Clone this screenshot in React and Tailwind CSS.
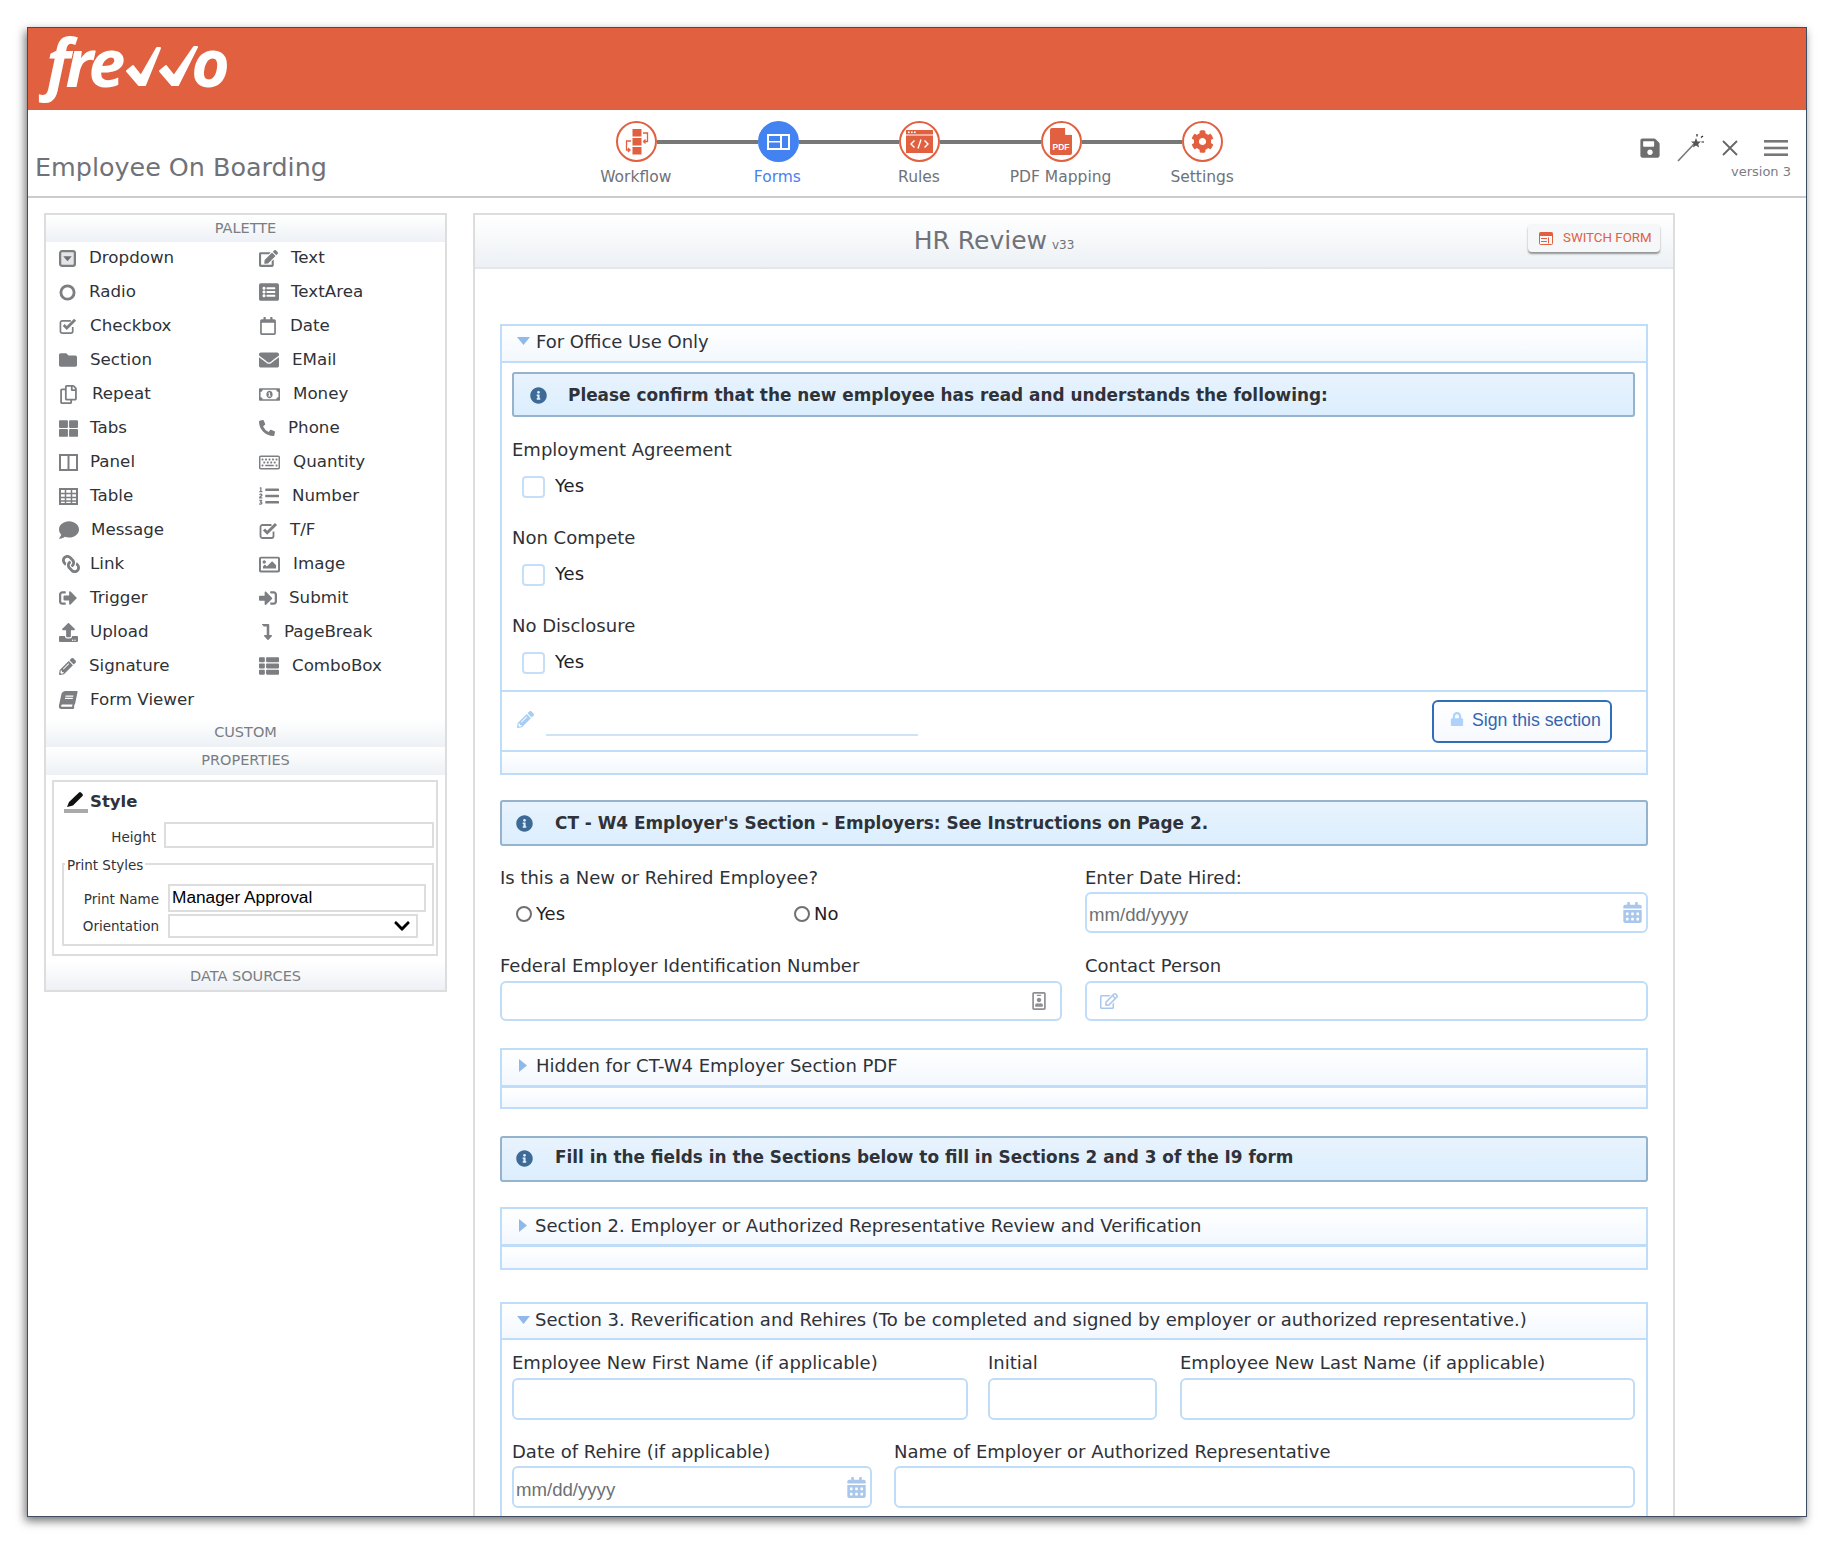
import React from "react";
import {
  FaFolder, FaRegCopy, FaThLarge, FaComment, FaLink, FaSignOutAlt, FaUpload, FaPencilAlt, FaBook, FaEdit, FaRegEdit, FaListAlt, FaRegCalendar,
  FaEnvelope, FaRegMoneyBillAlt, FaPhoneAlt, FaRegKeyboard, FaListOl, FaRegImage, FaSignInAlt, FaLevelDownAlt,
  FaThList, FaInfoCircle, FaLock, FaCalendarAlt, FaChevronDown, FaSave, FaCog, FaRegIdBadge,
} from "react-icons/fa";

const DropdownIcon = ({ size }) => (
  <svg width={size} height={size} viewBox="0 0 18 18">
    <rect x="1.2" y="1.2" width="15.6" height="15.6" rx="2" fill="#e4e5e6" stroke="#7c7e82" strokeWidth="2.4" />
    <path d="M4.5 6.5h9L9 12z" fill="#6c6e72" />
  </svg>
);

const RadioIcon = ({ size }) => (
  <svg width={size} height={size} viewBox="0 0 18 18" fill="none">
    <circle cx="9" cy="9" r="7" stroke="#7c7e82" strokeWidth="3" />
  </svg>
);

const CheckIcon = ({ size }) => (
  <svg width={size} height={size} viewBox="0 0 19 18" fill="none">
    <path d="M14.5 10v4.5a2 2 0 0 1-2 2h-9a2 2 0 0 1-2-2v-9a2 2 0 0 1 2-2h9" stroke="#7c7e82" strokeWidth="1.8" />
    <path d="m5 8 3.2 3.2L17 2.5" stroke="#7c7e82" strokeWidth="3" />
  </svg>
);

const PanelIcon = ({ size }) => (
  <svg width={size} height={size} viewBox="0 0 19 19" fill="none">
    <rect x="1" y="2" width="17" height="15" stroke="#7c7e82" strokeWidth="2" />
    <path d="M9.5 2v15" stroke="#7c7e82" strokeWidth="2" />
  </svg>
);

const TableIcon = ({ size }) => (
  <svg width={size} height={size} viewBox="0 0 19 19" fill="none">
    <rect x="1" y="2" width="17" height="15" fill="#fff" stroke="#7c7e82" strokeWidth="2" />
    <path d="M1 6.5h17M1 10.5h17M1 14h17M6.5 2v15M12.5 2v15" stroke="#7c7e82" strokeWidth="1.5" />
  </svg>
);

const leftItems = [
  { label: "Dropdown", Icon: DropdownIcon, size: 17, gap: "ml-[9px]" },
  { label: "Radio", Icon: RadioIcon, size: 17, gap: "ml-[9px]" },
  { label: "Checkbox", Icon: CheckIcon, size: 18, gap: "ml-[10px]" },
  { label: "Section", Icon: FaFolder, size: 18, gap: "ml-[10px]" },
  { label: "Repeat", Icon: FaRegCopy, size: 19, gap: "ml-[12px]" },
  { label: "Tabs", Icon: FaThLarge, size: 19, gap: "ml-[10px]" },
  { label: "Panel", Icon: PanelIcon, size: 19, gap: "ml-[10px]" },
  { label: "Table", Icon: TableIcon, size: 19, gap: "ml-[10px]" },
  { label: "Message", Icon: FaComment, size: 20, gap: "ml-[11px]" },
  { label: "Link", Icon: FaLink, size: 18, gap: "ml-[10px]", cls: "-scale-x-100" },
  { label: "Trigger", Icon: FaSignOutAlt, size: 18, gap: "ml-[10px]" },
  { label: "Upload", Icon: FaUpload, size: 19, gap: "ml-[10px]" },
  { label: "Signature", Icon: FaPencilAlt, size: 17, gap: "ml-[9px]" },
  { label: "Form Viewer", Icon: FaBook, size: 18, gap: "ml-[10px]", cls: "-skew-x-12" },
];

const rightItems = [
  { label: "Text", Icon: FaEdit, size: 19, gap: "ml-[11px]" },
  { label: "TextArea", Icon: FaListAlt, size: 20, gap: "ml-[11px]" },
  { label: "Date", Icon: FaRegCalendar, size: 18, gap: "ml-[10px]" },
  { label: "EMail", Icon: FaEnvelope, size: 20, gap: "ml-[12px]" },
  { label: "Money", Icon: FaRegMoneyBillAlt, size: 21, gap: "ml-[13px]" },
  { label: "Phone", Icon: FaPhoneAlt, size: 16, gap: "ml-[8px]" },
  { label: "Quantity", Icon: FaRegKeyboard, size: 21, gap: "ml-[13px]" },
  { label: "Number", Icon: FaListOl, size: 20, gap: "ml-[12px]" },
  { label: "T/F", Icon: CheckIcon, size: 19, gap: "ml-[10px]" },
  { label: "Image", Icon: FaRegImage, size: 21, gap: "ml-[13px]" },
  { label: "Submit", Icon: FaSignInAlt, size: 18, gap: "ml-[9px]" },
  { label: "PageBreak", Icon: FaLevelDownAlt, size: 16, gap: "ml-[4px]" },
  { label: "ComboBox", Icon: FaThList, size: 20, gap: "ml-[12px]" },
];

function PaletteItem({ item }) {
  const { Icon } = item;
  return (
    <div className="flex h-[34px] items-center">
      <span className={`flex w-[21px] items-center text-[#7c7e82] ${item.cls || ""}`}>
        <Icon size={item.size} />
      </span>
      <span className={`${item.gap} text-[16.7px] text-[#2f3238]`}>{item.label}</span>
    </div>
  );
}

function PanelHeading({ children, className = "" }) {
  return (
    <div className={`flex items-center justify-center bg-gradient-to-b from-white to-[#edf1f5] text-[14.5px] text-[#7a7d83] ${className}`}>
      {children}
    </div>
  );
}

function StepCircle({ active, children }) {
  return (
    <div
      className={`flex h-[41px] w-[41px] shrink-0 items-center justify-center rounded-full border-2 ${
        active ? "border-[#4282f1] bg-[#4282f1]" : "border-[#e0603f] bg-white"
      }`}
    >
      {children}
    </div>
  );
}

const WorkflowIcon = () => (
  <svg width="30" height="28" viewBox="0 0 30 28" fill="none">
    <rect x="10.5" y="1" width="9" height="7.5" fill="#e0603f" />
    <rect x="10.5" y="10" width="9" height="7.5" fill="#e0603f" />
    <rect x="10.5" y="19" width="9" height="7.5" fill="#e0603f" />
    <path d="M21 5h4.5v8.5H22M23.5 11.5l-2 2 2 2" stroke="#e0603f" strokeWidth="1.3" />
    <path d="M9 13H4.5v9H8M6 20l2 2-2 2" stroke="#e0603f" strokeWidth="1.3" />
  </svg>
);

const FormsIcon = () => (
  <svg width="23" height="16" viewBox="0 0 23 16">
    <rect width="23" height="16" fill="#fff" />
    <rect x="2" y="2" width="11" height="5" fill="#4282f1" />
    <rect x="2" y="8.5" width="11" height="5.5" fill="#4282f1" />
    <rect x="15" y="2" width="6" height="12" fill="#4282f1" />
  </svg>
);

const RulesIcon = () => (
  <svg width="27" height="23" viewBox="0 0 27 23">
    <rect width="27" height="23" fill="#e0603f" />
    <rect x="0" y="4.5" width="27" height="1" fill="#fff" />
    <rect x="2" y="1.5" width="1.6" height="1.6" fill="#fff" />
    <rect x="5" y="1.5" width="1.6" height="1.6" fill="#fff" />
    <rect x="8" y="1.5" width="1.6" height="1.6" fill="#fff" />
    <path d="M8.5 10.5 5 14l3.5 3.5M18.5 10.5 22 14l-3.5 3.5M15 9.5l-3 9" stroke="#fff" strokeWidth="1.4" fill="none" />
  </svg>
);

const PdfIcon = () => (
  <svg width="22" height="27" viewBox="0 0 22 27">
    <path d="M2 0h13l7 7v18a2 2 0 0 1-2 2H2a2 2 0 0 1-2-2V2a2 2 0 0 1 2-2z" fill="#e0603f" />
    <path d="M15.5 0v6.5H22" fill="#fff" stroke="#fff" strokeWidth="0.8" />
    <text x="11" y="22" textAnchor="middle" fontSize="8.5" fontWeight="700" fill="#fff" fontFamily="Liberation Sans, sans-serif">PDF</text>
  </svg>
);

const steps = [
  { label: "Workflow", icon: <WorkflowIcon /> },
  { label: "Forms", icon: <FormsIcon />, active: true },
  { label: "Rules", icon: <RulesIcon /> },
  { label: "PDF Mapping", icon: <PdfIcon /> },
  { label: "Settings", icon: <FaCog size={23} className="text-[#e0603f]" /> },
];

function Steps() {
  return (
    <div className="w-[710px] shrink-0 pt-[11px]">
      <div className="flex items-center pl-[51px]">
        {steps.map((s, i) => (
          <React.Fragment key={s.label}>
            <StepCircle active={s.active}>{s.icon}</StepCircle>
            {i < steps.length - 1 && <div className="h-1 w-[100.6px] bg-[#777]" />}
          </React.Fragment>
        ))}
      </div>
      <div className="mt-[5px] flex">
        {steps.map((s) => (
          <div
            key={s.label}
            className={`w-[141.6px] text-center text-[15.5px] leading-[20px] ${s.active ? "text-[#4a7ff0]" : "text-[#6f7278]"}`}
          >
            {s.label}
          </div>
        ))}
      </div>
    </div>
  );
}

function TopIcons() {
  return (
    <div className="ml-auto flex w-[150px] shrink-0 flex-col items-end pr-[18px] pt-[24px]">
      <div className="flex items-center">
        <FaSave size={22} className="text-[#6e6e6e]" />
        <svg width="28" height="28" viewBox="0 0 28 28" className="ml-[16px]" fill="none">
          <path d="M1 27 17 10" stroke="#777" strokeWidth="1.6" />
          <path d="m19 4 1.4 3.4 3.6.2-2.8 2.3.9 3.6-3.1-2-3 2 .9-3.6L14 7.6l3.6-.2z" fill="#555" />
          <path d="M20 0v2.5M26 2l-2 1.5M27 8h-2.5" stroke="#222" strokeWidth="1.2" />
        </svg>
        <svg width="16" height="16" viewBox="0 0 16 16" className="ml-[17px]" fill="none">
          <path d="m1 1 14 14M15 1 1 15" stroke="#666" strokeWidth="1.8" />
        </svg>
        <svg width="24" height="16" viewBox="0 0 24 16" className="ml-[26px]">
          <rect width="24" height="2.6" fill="#777" />
          <rect y="6.7" width="24" height="2.6" fill="#777" />
          <rect y="13.4" width="24" height="2.6" fill="#777" />
        </svg>
      </div>
      <div className="-mr-[3px] mt-[1px] text-[13px] leading-[18px] text-[#7a7d83]">version 3</div>
    </div>
  );
}

function Logo() {
  return (
    <div className="flex h-[82px] items-center pb-[16px] pl-[18px] font-['Open_Sans',sans-serif] text-[66px] font-bold italic leading-[66px] text-white">
      <span className="tracking-[-5px]">fre</span>
      <svg width="80" height="46" viewBox="0 0 80 46" className="ml-[4px] mt-[12px] shrink-0" fill="#fff" stroke="#fff" strokeWidth="2" strokeLinejoin="round">
        <path d="M3 27 9 22 17 32 33 4 36 4 21 41 15 41Z" />
        <path d="M36 27 42 22 50 32 70 3 73 3 54 41 48 41Z" />
      </svg>
      <span className="-ml-[13px]">o</span>
    </div>
  );
}

function Palette() {
  return (
    <div className="h-[779px] w-[403px] shrink-0 border-2 border-[#ddd]">
      <PanelHeading className="h-[27px]">PALETTE</PanelHeading>
      <div className="-mt-[1px] flex pl-[13px]">
        <div className="w-[200px]">
          {leftItems.map((it) => (
            <PaletteItem key={it.label} item={it} />
          ))}
        </div>
        <div>
          {rightItems.map((it) => (
            <PaletteItem key={it.label} item={it} />
          ))}
        </div>
      </div>
      <PanelHeading className="mt-[2px] h-[28px]">CUSTOM</PanelHeading>
      <PanelHeading className="h-[28px]">PROPERTIES</PanelHeading>
      <div className="ml-[6px] mt-[5px] h-[176px] w-[386px] border-2 border-[#ddd] pl-[8px]">
        <div className="flex h-[40px] items-center pl-[2px]">
          <div className="w-[24px] border-b-[4px] border-[#aaa] pb-[1px]">
            <svg width="20" height="17" viewBox="0 0 20 17" className="ml-[2px]">
              <path d="M1 16l2-5L13 1.5a1.5 1.5 0 0 1 2 0l1.5 1.5a1.5 1.5 0 0 1 0 2L7 14.5z" fill="#111" />
            </svg>
          </div>
          <span className="ml-[2px] text-[16.5px] font-bold text-[#2f3238]">Style</span>
        </div>
        <div className="flex items-center">
          <span className="mt-[4px] w-[94px] text-right text-[13.5px] text-[#2f3238]">Height</span>
          <div className="ml-[8px] h-[26px] w-[270px] border-2 border-[#ddd]" />
        </div>
        <fieldset className="mt-[7px] h-[91px] w-[372px] border-2 border-[#ddd]">
          <legend className="ml-[1px] px-[2px] pt-[2px] text-[13.5px] leading-[16px] text-[#2f3238]">Print Styles</legend>
          <div className="mt-[11px] flex items-center">
            <span className="mt-[3px] w-[95px] text-right text-[13.5px] text-[#2f3238]">Print Name</span>
            <div className="ml-[9px] flex h-[28px] w-[258px] items-center border-2 border-[#ddd] pl-[2px] font-['Liberation_Sans',sans-serif] text-[17.3px] text-black">
              Manager Approval
            </div>
          </div>
          <div className="mt-[2px] flex items-center">
            <span className="w-[95px] text-right text-[13.5px] text-[#2f3238]">Orientation</span>
            <div className="ml-[9px] flex h-[24px] w-[250px] items-center justify-end border-2 border-[#ddd] pr-[5px]">
              <FaChevronDown size={18} className="text-black" />
            </div>
          </div>
        </fieldset>
      </div>
      <PanelHeading className="mt-[6px] h-[28px] pt-[2px]">DATA SOURCES</PanelHeading>
    </div>
  );
}

function InfoBar({ children, inset, className = "" }) {
  return (
    <div className={`flex items-center rounded-[3px] border-2 border-[#95b3cd] bg-gradient-to-b from-[#e8f3fd] to-[#dceefd] ${className}`}>
      <FaInfoCircle size={17} className={`shrink-0 text-[#3d6a96] ${inset}`} />
      <span className="text-[16.9px] font-bold text-[#2f3238]">{children}</span>
    </div>
  );
}

function Caret({ open }) {
  return open ? (
    <svg width="13" height="8" viewBox="0 0 13 8" className="shrink-0">
      <path d="M0 0h13L6.5 8z" fill="#8fb9ea" />
    </svg>
  ) : (
    <svg width="8" height="13" viewBox="0 0 8 13" className="shrink-0">
      <path d="M0 0v13l8-6.5z" fill="#8fb9ea" />
    </svg>
  );
}

function SectionHead({ open, caretGap, children, className = "" }) {
  return (
    <div className={`flex items-center bg-gradient-to-b from-white to-[#f3f8fe] text-[18px] text-[#2f3238] ${className}`}>
      <Caret open={open} />
      <span className={caretGap}>{children}</span>
    </div>
  );
}

function CollapsedSection({ title, stripe = "h-[19px]", gap, pad = "pb-[5px]", className = "" }) {
  return (
    <div className={`border-2 border-[#bfdcf8] ${className}`}>
      <SectionHead caretGap={gap} className={`h-[38px] border-b-[3px] border-[#bfdcf8] pl-[17px] ${pad}`}>
        {title}
      </SectionHead>
      <div className={`${stripe} bg-gradient-to-b from-white to-[#f3f8fe]`} />
    </div>
  );
}

function Box({ className = "", children }) {
  return <div className={`flex items-center rounded-[6px] border-2 border-[#bfdcf8] ${className}`}>{children}</div>;
}

function CheckGroup({ label }) {
  return (
    <div className="h-[88px]">
      <Label>{label}</Label>
      <div className="mt-[12px] flex h-[24px] items-center pl-[10px]">
        <div className="mt-[3px] h-[22px] w-[23px] rounded-[4px] border-2 border-[#c6dff8]" />
        <span className="ml-[10px] text-[18px] text-[#1f2226]">Yes</span>
      </div>
    </div>
  );
}

function Label({ children, className = "" }) {
  return <div className={`h-[24px] pt-[1px] text-[18px] leading-[24px] text-[#2f3238] ${className}`}>{children}</div>;
}

function Radio({ label, className = "" }) {
  return (
    <div className={`flex items-center ${className}`}>
      <div className="h-[16px] w-[16px] rounded-full border-2 border-[#707070] bg-white" />
      <span className="ml-[4px] text-[18px] text-[#1f2226]">{label}</span>
    </div>
  );
}

function DateBox({ className = "" }) {
  return (
    <Box className={`justify-between pl-[2px] pr-[3px] ${className}`}>
      <span className="mt-[5px] font-['Liberation_Sans',sans-serif] text-[18.6px] text-[#6e7074]">mm/dd/yyyy</span>
      <FaCalendarAlt size={21} className="text-[#a9c7ec]" />
    </Box>
  );
}

function OfficeSection() {
  return (
    <div className="border-2 border-[#bfdcf8]">
      <SectionHead open caretGap="ml-[6px]" className="h-[37px] border-b-2 border-[#bfdcf8] pb-[5px] pl-[15px]">
        For Office Use Only
      </SectionHead>
      <div className="h-[327px] pl-[10px] pr-[11px] pt-[9px]">
        <InfoBar inset="ml-[16px] mr-[21px]" className="h-[45px] pt-[2px]">
          Please confirm that the new employee has read and understands the following:
        </InfoBar>
        <div className="mt-[20px]">
          <CheckGroup label="Employment Agreement" />
          <CheckGroup label="Non Compete" />
          <CheckGroup label="No Disclosure" />
        </div>
      </div>
      <div className="flex h-[62px] items-center border-y-2 border-[#bfdcf8] pl-[15px] pr-[34px]">
        <FaPencilAlt size={17} className="mb-[4px] text-[#a9ccf2]" />
        <div className="ml-[12px] mt-[28px] h-[2px] w-[372px] bg-[#cfe3f7]" />
        <button className="ml-auto flex h-[43px] w-[180px] items-center rounded-[6px] border-2 border-[#2f6eb8] bg-gradient-to-b from-white to-[#f6f9fe] pl-[16px] font-['Liberation_Sans',sans-serif] text-[17.7px] text-[#3465b0]">
          <FaLock size={14} className="mb-[4px] text-[#aed2fb]" />
          <span className="mb-[2px] ml-[8px]">Sign this section</span>
        </button>
      </div>
      <div className="h-[21px] bg-gradient-to-b from-white to-[#f3f8fe]" />
    </div>
  );
}

function EmployerFields() {
  return (
    <div className="mt-[19px] grid grid-cols-[562px_563px] gap-x-[23px]">
      <div className="h-[88px]">
        <Label>Is this a New or Rehired Employee?</Label>
        <div className="mt-[4px] flex h-[41px] items-center pl-[16px]">
          <Radio label="Yes" className="w-[278px]" />
          <Radio label="No" />
        </div>
      </div>
      <div className="h-[88px]">
        <Label>Enter Date Hired:</Label>
        <DateBox className="mt-[3px] h-[41px]" />
      </div>
      <div>
        <Label>Federal Employer Identification Number</Label>
        <Box className="mt-[4px] h-[40px] justify-end pr-[12px]">
          <FaRegIdBadge size={18} className="text-[#8d8f92]" />
        </Box>
      </div>
      <div>
        <Label>Contact Person</Label>
        <Box className="mt-[4px] h-[40px] pl-[13px]">
          <FaRegEdit size={18} className="text-[#a9c7ec]" />
        </Box>
      </div>
    </div>
  );
}

function ReverificationSection() {
  return (
    <div className="mt-[32px] h-[260px] border-x-2 border-t-2 border-[#bfdcf8]">
      <SectionHead open caretGap="ml-[5px]" className="h-[36px] border-b-2 border-[#bfdcf8] pb-[3px] pl-[15px]">
        Section 3. Reverification and Rehires (To be completed and signed by employer or authorized representative.)
      </SectionHead>
      <div className="pl-[10px] pr-[10px] pt-[10px]">
        <div className="grid grid-cols-[456px_169px_458px] gap-x-[20px]">
          <div>
            <Label>Employee New First Name (if applicable)</Label>
            <Box className="mt-[4px] h-[42px]" />
          </div>
          <div>
            <Label>Initial</Label>
            <Box className="mt-[4px] h-[42px]" />
          </div>
          <div className="ml-[3px]">
            <Label>Employee New Last Name (if applicable)</Label>
            <Box className="mt-[4px] h-[42px]" />
          </div>
        </div>
        <div className="mt-[19px] grid grid-cols-[360px_741px] gap-x-[22px]">
          <div>
            <Label>Date of Rehire (if applicable)</Label>
            <DateBox className="mt-[3px] h-[42px]" />
          </div>
          <div>
            <Label>Name of Employer or Authorized Representative</Label>
            <Box className="mt-[3px] h-[42px]" />
          </div>
        </div>
      </div>
    </div>
  );
}

function FormPanel() {
  return (
    <div className="h-[1320px] w-[1202px] shrink-0 border-2 border-[#ddd]">
      <div className="relative flex h-[54px] items-center justify-center border-b-2 border-[#e3e6ea] bg-gradient-to-b from-white to-[#edf1f5] pr-[160px]">
        <div className="flex items-baseline text-[#6f7278]">
          <span className="text-[25px]">HR Review</span>
          <span className="ml-[5px] text-[12px]">v33</span>
        </div>
        <button className="absolute right-[13px] top-[9px] flex h-[28px] w-[132px] items-center rounded-[4px] bg-[#f6f7f9] pl-[11px] font-['Roboto',sans-serif] text-[13.3px] text-[#e0603f] shadow-[0_2px_2px_rgba(0,0,0,0.4)]">
          <svg width="14" height="13" viewBox="0 0 14 13" fill="none">
            <rect x="0.5" y="0.5" width="13" height="12" rx="1" stroke="#e0603f" />
            <rect x="0.5" y="0.5" width="13" height="3.5" fill="#e0603f" />
            <path d="M2 6.5h6M2 9.5h6M9.5 5.5v6" stroke="#e0603f" />
          </svg>
          <span className="ml-[10px]">SWITCH FORM</span>
        </button>
      </div>
      <div className="px-[25px] pt-[55px]">
        <OfficeSection />
        <InfoBar inset="ml-[14px] mr-[22px]" className="mt-[25px] h-[46px] pt-[1px]">
          CT - W4 Employer's Section - Employers: See Instructions on Page 2.
        </InfoBar>
        <EmployerFields />
        <CollapsedSection title="Hidden for CT-W4 Employer Section PDF" gap="ml-[9px]" className="mt-[27px]" />
        <InfoBar inset="ml-[14px] mr-[22px]" className="mt-[27px] h-[46px] pb-[2px]">
          Fill in the fields in the Sections below to fill in Sections 2 and 3 of the I9 form
        </InfoBar>
        <CollapsedSection title="Section 2. Employer or Authorized Representative Review and Verification" stripe="h-[21px]" gap="ml-[8px]" pad="pb-[2px]" className="mt-[25px]" />
        <ReverificationSection />
      </div>
    </div>
  );
}

export default function App() {
  return (
    <div className="h-[1545px] bg-white pl-[27px] pt-[27px] font-['DejaVu_Sans',sans-serif]">
      <div className="h-[1490px] w-[1780px] border border-[#3f4d63] bg-white shadow-[-2px_4px_9px_rgba(0,0,0,0.55)]">
        <div className="h-[82px] bg-[#e0603f]">
          <Logo />
        </div>
        <div className="flex h-[88px] border-b-2 border-[#ccc]">
          <div className="w-[537px] shrink-0 pl-[7px] pt-[40px] text-[25.4px] leading-[34px] text-[#6f7278]">Employee On Boarding</div>
          <Steps />
          <TopIcons />
        </div>
        <div className="flex h-[1318px] gap-x-[26px] overflow-hidden pl-[16px] pt-[15px]">
          <Palette />
          <FormPanel />
        </div>
      </div>
    </div>
  );
}
